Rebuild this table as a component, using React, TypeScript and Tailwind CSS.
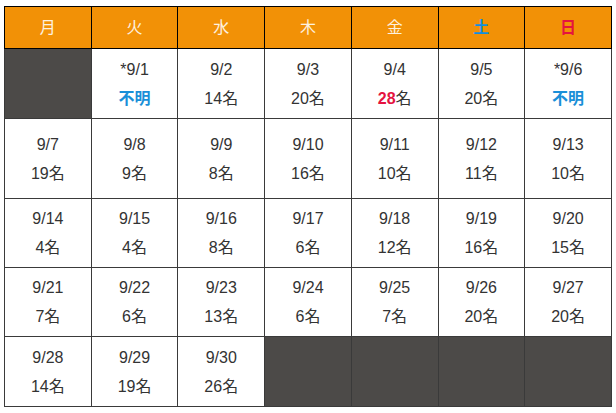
const days = [
  { label: '月', cls: 'font-normal text-[#fdf2e0]' },
  { label: '火', cls: 'font-normal text-[#fdf2e0]' },
  { label: '水', cls: 'font-normal text-[#fdf2e0]' },
  { label: '木', cls: 'font-normal text-[#fdf2e0]' },
  { label: '金', cls: 'font-normal text-[#fdf2e0]' },
  { label: '土', cls: 'font-bold text-[#0f8fe0]' },
  { label: '日', cls: 'font-bold text-[#e5133f]' },
];

type Cell = null | { date: string; count: string; kind?: 'unknown' | 'hot' };

const weeks: { h: string; cells: Cell[] }[] = [
  {
    h: 'h-[70px]',
    cells: [
      null,
      { date: '*9/1', count: '不明', kind: 'unknown' },
      { date: '9/2', count: '14' },
      { date: '9/3', count: '20' },
      { date: '9/4', count: '28', kind: 'hot' },
      { date: '9/5', count: '20' },
      { date: '*9/6', count: '不明', kind: 'unknown' },
    ],
  },
  {
    h: 'h-[80px]',
    cells: [
      { date: '9/7', count: '19' },
      { date: '9/8', count: '9' },
      { date: '9/9', count: '8' },
      { date: '9/10', count: '16' },
      { date: '9/11', count: '10' },
      { date: '9/12', count: '11' },
      { date: '9/13', count: '10' },
    ],
  },
  {
    h: 'h-[69px]',
    cells: [
      { date: '9/14', count: '4' },
      { date: '9/15', count: '4' },
      { date: '9/16', count: '8' },
      { date: '9/17', count: '6' },
      { date: '9/18', count: '12' },
      { date: '9/19', count: '16' },
      { date: '9/20', count: '15' },
    ],
  },
  {
    h: 'h-[69px]',
    cells: [
      { date: '9/21', count: '7' },
      { date: '9/22', count: '6' },
      { date: '9/23', count: '13' },
      { date: '9/24', count: '6' },
      { date: '9/25', count: '7' },
      { date: '9/26', count: '20' },
      { date: '9/27', count: '20' },
    ],
  },
  {
    h: 'h-[70px]',
    cells: [
      { date: '9/28', count: '14' },
      { date: '9/29', count: '19' },
      { date: '9/30', count: '26' },
      null,
      null,
      null,
      null,
    ],
  },
];

function Count({ cell }: { cell: NonNullable<Cell> }) {
  if (cell.kind === 'unknown') {
    return <span className="font-bold text-[#1a8fd8]">不明</span>;
  }
  if (cell.kind === 'hot') {
    return (
      <span>
        <span className="font-bold text-[#e5133f]">{cell.count}</span>名
      </span>
    );
  }
  return <span>{cell.count}名</span>;
}

export default function App() {
  return (
    <div
      className="bg-white w-[616px] h-[413px] pt-[6px] pl-[4px]"
      style={{ fontFamily: '"Liberation Sans", "Noto Sans CJK JP", sans-serif' }}
    >
      <table className="w-[608px] table-fixed border-collapse text-[16px] text-[#333333]">
        <thead>
          <tr className="h-[42px] bg-[#f29106]">
            {days.map((d) => (
              <th key={d.label} className={`border border-black text-center ${d.cls}`}>
                {d.label}
              </th>
            ))}
          </tr>
        </thead>
        <tbody>
          {weeks.map((w, i) => (
            <tr key={i} className={w.h}>
              {w.cells.map((c, j) =>
                c ? (
                  <td key={j} className="border border-[#3a3a3a] text-center align-middle">
                    <div className="leading-[29px]">{c.date}</div>
                    <div className="leading-[29px]">
                      <Count cell={c} />
                    </div>
                  </td>
                ) : (
                  <td key={j} className="border border-[#3a3a3a] bg-[#4c4a48]" />
                )
              )}
            </tr>
          ))}
        </tbody>
      </table>
    </div>
  );
}
